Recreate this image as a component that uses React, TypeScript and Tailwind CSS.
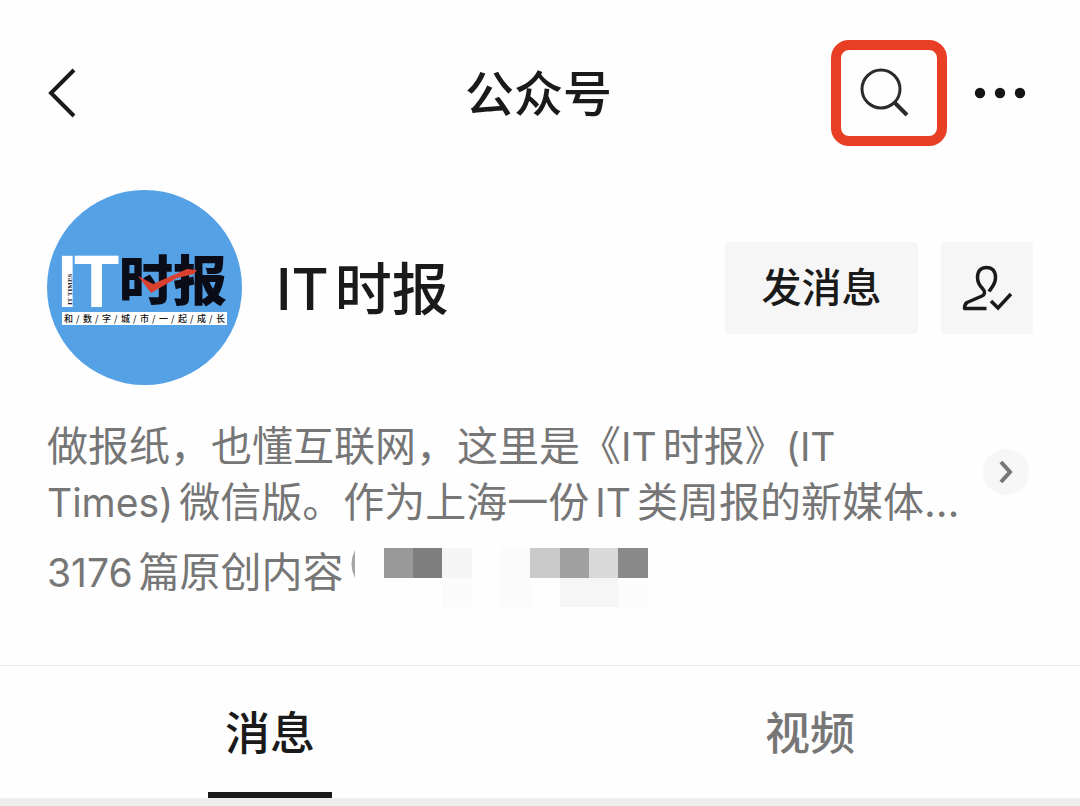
import { ReactNode, useState } from 'react';

const FONT = "font-[Inter,'Noto_Sans_CJK_SC',sans-serif]";

const TABS = [
  { id: 'messages', label: '消息' },
  { id: 'videos', label: '视频' },
];

// モザイクのセル（9列 x 2行）
const MOSAIC = [
  'bg-[#999999]', 'bg-[#7f7f7f]', 'bg-[#f5f5f5]', 'bg-[#fefefe]', 'bg-[#fbfbfb]', 'bg-[#c9c9c9]', 'bg-[#a0a0a0]', 'bg-[#d9d9d9]', 'bg-[#898989]',
  'bg-[#fdfdfd]', 'bg-[#fefefe]', 'bg-[#fbfbfb]', 'bg-[#fdfdfd]', 'bg-[#fbfbfb]', 'bg-[#fdfdfd]', 'bg-[#f6f6f6]', 'bg-[#f6f6f6]', 'bg-[#fcfcfc]',
];

function Logo() {
  return (
    <svg viewBox="0 0 195 195" className="size-[195px] shrink-0" role="img" aria-label="IT时报">
      <circle cx="97.5" cy="97.5" r="97.5" fill="#55a1e6" />
      <g fontFamily="'Liberation Sans', sans-serif" fontWeight="700" fontSize="74" fill="#fff">
        <text x="10" y="117">I</text>
        <text x="27" y="117">T</text>
      </g>
      <text
        transform="translate(25 115) rotate(-90)"
        fontFamily="'Liberation Serif', serif"
        fontWeight="700"
        fontSize="7"
        fill="#223"
      >
        IT TIMES
      </text>
      <text
        x="72"
        y="111"
        fontFamily="'Noto Sans CJK SC', sans-serif"
        fontWeight="900"
        fontSize="54"
        fill="#0a0d18"
      >
        时报
      </text>
      <path d="M91 86 L106 94 L140 79 L150 80 L147 84 L130 88 L104 103 Z" fill="#d9402f" />
      <rect x="15" y="122" width="165" height="13" fill="#fff" />
      <text
        x="17 29 36 48 55 67 74 86 93 105 112 124 131 143 150 162 169"
        y="132"
        fontFamily="'Noto Sans CJK SC', sans-serif"
        fontWeight="500"
        fontSize="9"
        fill="#111"
      >
        和/数/字/城/市/一/起/成/长
      </text>
    </svg>
  );
}

function FollowedIcon() {
  return (
    <svg viewBox="0 0 50 46" className="h-[46px] w-[50px]" fill="none" stroke="#1a1a1a" strokeWidth="3.5">
      <path
        d="M27 26.500 C28.500 23.500 33.500 20 33.500 12.500 C33.500 6 30 2.500 24.500 2.500 C19 2.500 15.500 6 15.500 12.500 C15.500 17.500 17.500 20.500 20.500 23.500 C23.500 26.500 23 29.500 20 31 L5 37.500 C3 39 2.500 41 2.500 43.500 H24.500"
        strokeLinejoin="round"
      />
      <path d="M29 36 L36 43 L49 29" />
    </svg>
  );
}

// 漢字の間に入る欧文
function Latin({ children }: { children: ReactNode }) {
  return <span className="mr-1.5 text-[39px] leading-none">{children}</span>;
}

export default function App() {
  const [tab, setTab] = useState('messages');

  return (
    <div className={`${FONT} bg-[#fefefe] text-[#1a1a1a]`} lang="zh-CN">
      <header className="grid h-[186px] grid-cols-[1fr_auto_1fr] items-center pr-[51px] pl-12">
        <button aria-label="返回" className="justify-self-start">
          <svg viewBox="0 0 28 50" className="h-[50px] w-7" fill="none" stroke="#1a1a1a" strokeWidth="4">
            <path d="M26 2 L3 25 L26 48" />
          </svg>
        </button>
        <h1 className="pt-1 text-[49px] leading-[56px] font-medium">公众号</h1>
        <div className="flex items-center gap-6 justify-self-end">
          <button
            aria-label="搜索"
            className="flex h-[106px] w-[116px] items-center justify-center rounded-[18px] border-10 border-[#e83f24] pr-2"
          >
            <svg viewBox="0 0 50 50" className="size-[50px]" fill="none" stroke="#2b2b2b" strokeWidth="3">
              <circle cx="21" cy="21" r="19" />
              <path d="M34 34 L47 47" strokeWidth="4" />
            </svg>
          </button>
          <button aria-label="更多">
            <svg viewBox="0 0 58 12" className="h-3 w-[58px]" fill="#151515">
              <circle cx="9" cy="6" r="5.2" />
              <circle cx="29" cy="6" r="5.2" />
              <circle cx="49" cy="6" r="5.2" />
            </svg>
          </button>
        </div>
      </header>

      <section className="px-[47px] pt-1">
        <div className="flex items-center">
          <Logo />
          <h2 className="ml-[34px] flex-1 pt-1 text-[57px] leading-[64px] font-medium">
            <span className="mr-1.5">IT</span>时报
          </h2>
          <button className="h-[92px] w-[193px] rounded-sm bg-[#f6f6f6] text-[40px] leading-[48px] font-medium">
            发消息
          </button>
          <button
            aria-label="已关注"
            className="ml-[23px] flex size-[92px] items-center justify-center rounded-sm bg-[#f6f6f6]"
          >
            <FollowedIcon />
          </button>
        </div>

        <div className="mt-[33px] flex items-center justify-between text-[41px] leading-[56px] text-[#767676]">
          <p className="whitespace-nowrap">
            做报纸，也懂互联网，这里是《<Latin>IT</Latin>时报》<Latin>(IT</Latin>
            <br />
            <Latin>Times)</Latin>微信版。作为上海一份
            <span className="ml-1.5">
              <Latin>IT</Latin>
            </span>
            类周报的新媒体…
          </p>
          <button
            aria-label="展开"
            className="mr-1 mb-1 flex size-[46px] shrink-0 items-center justify-center rounded-full bg-[#f6f6f6]"
          >
            <svg viewBox="0 0 14 24" className="h-6 w-3.5" fill="none" stroke="#767676" strokeWidth="4">
              <path d="M2 2 L11 12 L2 22" />
            </svg>
          </button>
        </div>

        <div className="mt-3.5 flex items-start text-[41px] leading-[56px] text-[#767676]">
          <p>
            <Latin>3176</Latin>篇原创内容
          </p>
          <svg viewBox="0 0 6 28" className="mt-1.5 ml-1.5 h-7 w-1.5" fill="#a5a5a5">
            <path d="M5 0 Q-2 14 5 28Z" />
          </svg>
          <div className="mt-1 ml-7 grid w-[264px] grid-cols-9 grid-rows-[30px_29px]">
            {MOSAIC.map((color, i) => (
              <div key={i} className={color} />
            ))}
          </div>
        </div>
      </section>

      <nav className="mt-[58px] flex border-t border-b-8 border-t-[#e8e8e8] border-b-[#ededed]">
        {TABS.map((t) => (
          <button
            key={t.id}
            onClick={() => setTab(t.id)}
            className={`flex h-[132px] flex-1 flex-col items-center justify-end text-[45px] leading-[60px] font-medium ${
              tab === t.id ? 'text-[#1a1a1a]' : 'text-[#767676]'
            }`}
          >
            {t.label}
            <span className={`mt-7 h-1.5 w-[124px] ${tab === t.id ? 'bg-[#1a1a1a]' : ''}`} />
          </button>
        ))}
      </nav>
    </div>
  );
}
